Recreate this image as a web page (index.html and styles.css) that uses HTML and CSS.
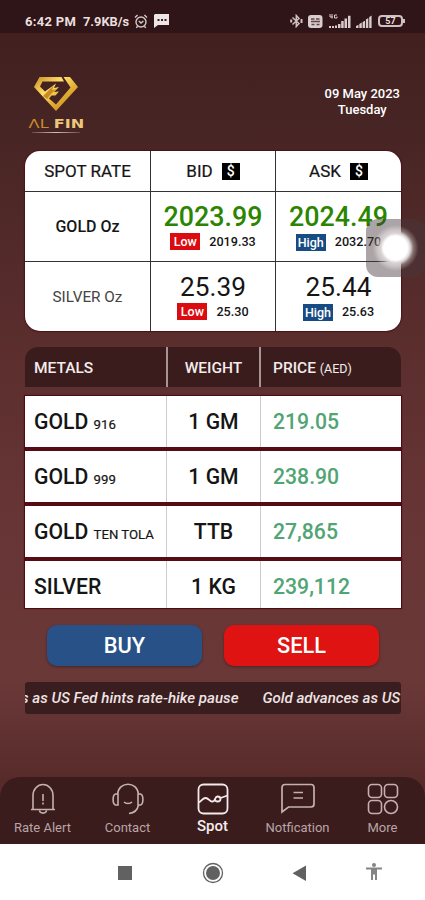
FILE: index.html
```html
<!DOCTYPE html>
<html lang="en">
<head>
    <meta charset="UTF-8">
    <meta name="viewport" content="width=device-width, initial-scale=1.0">
    <title>Al Fin - Spot Rate</title>
    <link rel="stylesheet" href="styles.css">
</head>
<body>

    <!-- Phone status bar -->
    <div class="status-bar">
        <span class="time">6:42 PM</span>
        <span class="speed">7.9KB/s</span>
        <svg class="alarm" width="14" height="15" viewBox="0 0 14 15" fill="none" stroke="#d5c8c8" stroke-width="1.4">
            <circle cx="7" cy="8" r="5"/>
            <path d="M1 3.4 3.6 1M13 3.4 10.4 1M4.8 7 7 9l2.4-2M3.5 12.2 2.4 14M10.5 12.2l1.1 1.8"/>
        </svg>
        <svg class="sms" width="16" height="14" viewBox="0 0 16 14">
            <path d="M1 0h14v11H4L0 14V1z" fill="#eee6e6"/>
            <path d="M3.5 5h2v2h-2zM7 5h2v2H7zM10.5 5h2v2h-2z" fill="#3a2020"/>
        </svg>
        <div class="status-right">
            <svg width="13" height="14" viewBox="0 0 13 14" fill="none" stroke="#cfc1c1" stroke-width="1.5">
                <path d="M2.5 3.5 9 9.500 6.300 12.500v-11L9 4.500 2.500 10.500"/>
                <path d="M1.200 5.500v3M11.500 5v4" stroke-width="2"/>
            </svg>
            <svg width="15" height="13" viewBox="0 0 15 13">
                <rect x="0" y="0" width="14.5" height="13" rx="3" fill="#d8cccc"/>
                <path d="M3 4h3.5M8 4h3.5M3 6.5h9M3.5 9.5h3M8.5 9.5h3" stroke="#604646" stroke-width="1.4"/>
            </svg>
            <svg width="23" height="15" viewBox="0 0 23 15" fill="#d8cccc">
                <path d="M1 12h2v2H1zM4 12h2v2H4zM7 11.5h2V14H7zM10 10h2.5v4H10zM13.2 7h2.5v7h-2.5zM16.5 4.5H19V14h-2.5zM20 1.8h2.5V14H20z"/>
                <path d="M2 0v3h3M4 0v4.5M9 1H6.5v3H9V2.5" fill="none" stroke="#d8cccc"/>
            </svg>
            <svg width="16" height="15" viewBox="0 0 16 15" fill="#d8cccc">
                <path d="M0 14v-2l2.5-1.3V14zM3.3 14v-4l2.5-1.5V14zM6.6 14V8L9 6.7V14zM9.900 14V5.500L12.300 4v10zM13.200 14V3l2.400-1.400V14z"/>
            </svg>
            <div class="battery">57</div>
        </div>
    </div>

    <header>
        <div class="logo">
            <svg width="46" height="36" viewBox="0 0 46 36">
                <defs>
                    <linearGradient id="gold" x1="0" y1="0" x2="1" y2="1">
                        <stop offset="0" stop-color="#c98a21"/>
                        <stop offset="0.35" stop-color="#ffdf68"/>
                        <stop offset="0.6" stop-color="#e2ad31"/>
                        <stop offset="1" stop-color="#b97b1c"/>
                    </linearGradient>
                </defs>
                <path d="M6.500 1H28.500L31 5.500H9.500L7 10.500l5 5 11-8-2 4.500 5-1-5 5 5-.5-3.500 4h-4l-2.500 3 7 6L37.500 11.500 30.500 1H37l8 10-22 24L1 11z" fill="url(#gold)"/>
                <path d="M10 20 21 9l-2 5 4-1-5 5-4 5z" fill="#c88b24"/>
            </svg>
            <div class="logo-name"><span>ΛL</span> <b>FIN</b></div>
            <div class="logo-line"></div>
        </div>
        <div class="date">09 May 2023<br>Tuesday</div>
    </header>

    <!-- Spot rates -->
    <div class="spot">
        <div class="cell head">SPOT RATE</div>
        <div class="cell head">BID <span class="dollar">$</span></div>
        <div class="cell head">ASK <span class="dollar">$</span></div>

        <div class="cell name">GOLD Oz</div>
        <div class="cell">
            <div class="rate green">2023.99</div>
            <div class="limit"><span class="tag low">Low</span>2019.33</div>
        </div>
        <div class="cell">
            <div class="rate green">2024.49</div>
            <div class="limit"><span class="tag high">High</span>2032.70</div>
        </div>

        <div class="cell name silver">SILVER Oz</div>
        <div class="cell">
            <div class="rate">25.39</div>
            <div class="limit"><span class="tag low">Low</span>25.30</div>
        </div>
        <div class="cell">
            <div class="rate">25.44</div>
            <div class="limit"><span class="tag high">High</span>25.63</div>
        </div>
        <div class="touch"></div>
    </div>

    <!-- Metal prices -->
    <div class="metals-head">
        <div>METALS</div>
        <div>WEIGHT</div>
        <div>PRICE <small>(AED)</small></div>
    </div>
    <div class="metals">
        <div class="metal">
            <div>GOLD <small>916</small></div>
            <div>1 GM</div>
            <div>219.05</div>
        </div>
        <div class="metal">
            <div>GOLD <small>999</small></div>
            <div>1 GM</div>
            <div>238.90</div>
        </div>
        <div class="metal">
            <div>GOLD <small>TEN TOLA</small></div>
            <div>TTB</div>
            <div>27,865</div>
        </div>
        <div class="metal">
            <div>SILVER</div>
            <div>1 KG</div>
            <div>239,112</div>
        </div>
    </div>

    <div class="actions">
        <button class="buy">BUY</button>
        <button class="sell">SELL</button>
    </div>

    <div class="ticker">
        <div class="news"><span>s as US Fed hints rate-hike pause</span><span>Gold advances as US</span></div>
    </div>

    <!-- Bottom menu -->
    <nav>
        <a>
            <svg width="26" height="32" viewBox="0 0 26 32" fill="none" stroke="#c4b0b0" stroke-width="1.6">
                <path d="M3 26V12.500a10 11 0 0 1 20 0V26M1 26.500h24M9.500 27.500c.5 3.500 6.500 3.500 7 0M13 11v7M13 19.500v2"/>
            </svg>
            <span>Rate Alert</span>
        </a>
        <a>
            <svg width="32" height="32" viewBox="0 0 32 32" fill="none" stroke="#c4b0b0" stroke-width="1.6">
                <path d="M5.500 11C7-2 25-2 26.500 11M6 11H3.500C.3 12 .3 21 3.500 22H6zM26 11h2.500c3.200 1 3.200 10 0 11H26zM26.500 22c-1 5-4 8-9.500 8.500M12 19c2 2 6 2 8 0"/>
            </svg>
            <span>Contact</span>
        </a>
        <a class="active">
            <svg width="32" height="32" viewBox="0 0 32 32" fill="none" stroke="#f3eaea" stroke-width="1.8">
                <rect x="1.500" y="1.500" width="29" height="29" rx="5"/>
                <path d="M1.500 19.500c3-1 4-4.500 7-4.500 3.500 0 4 4 7 3.500 3 0 2-5 5-5 2 0 3 1 3 2.500s-1.500 2.500-3 2.500-2.500-1-2.500-2.500M23.500 15l7-2.500"/>
            </svg>
            <span>Spot</span>
        </a>
        <a>
            <svg width="34" height="32" viewBox="0 0 34 32" fill="none" stroke="#c4b0b0" stroke-width="1.700">
                <path d="M1 29V4.500Q1 1.500 4 1.500h26q3 0 3 3V21q0 3-3 3H7.500zM12.500 9.500h9.500M12.500 15h9.500"/>
            </svg>
            <span>Notfication</span>
        </a>
        <a>
            <svg width="32" height="32" viewBox="0 0 32 32" fill="none" stroke="#c4b0b0" stroke-width="1.600">
                <rect x="1.500" y="1.500" width="13" height="13" rx="3.500"/>
                <rect x="17.500" y="1.500" width="13" height="13" rx="3.500"/>
                <rect x="1.500" y="17.500" width="13" height="13" rx="3.500"/>
                <circle cx="24" cy="24" r="6.500"/>
            </svg>
            <span>More</span>
        </a>
    </nav>

    <div class="system-bar">
        <svg width="425" height="57" viewBox="0 0 425 57" fill="#616161">
            <rect x="118" y="22" width="14" height="14"/>
            <circle cx="213" cy="29" r="9.500" fill="none" stroke="#616161" stroke-width="1.300"/>
            <circle cx="213" cy="29" r="7"/>
            <path d="M306 21.500V37L292.500 29.300z"/>
            <circle cx="374" cy="21" r="2" fill="#858585"/>
            <path d="M366 23.500h16v2h-5V36h-2v-5.500h-2V36h-2V25.500h-5z" fill="#858585"/>
        </svg>
    </div>

</body>
</html>
```
FILE: styles.css
```css
* {
    box-sizing: border-box;
}

body {
    font-family: Roboto, "Liberation Sans", sans-serif;
    margin: 0;
    height: 900px;
    overflow: hidden;
    color: #151515;
    background: linear-gradient(to bottom, #401e1e 0, #472524 130px, #5a2d2d 330px, #683536 520px, #6b3838 680px, #582b2b 780px);
}

/* Status bar */
.status-bar {
    height: 33px;
    padding: 9px 20px 0 25px;
    display: flex;
    align-items: center;
    background: #2f1517;
    color: #e9dfdf;
    font-size: 13px;
    font-weight: 700;
}

.time {
    width: 58px;
    letter-spacing: 0.3px;
    white-space: nowrap;
}

.speed {
    width: 51px;
    font-size: 12.8px;
    white-space: nowrap;
}

.sms {
    margin-left: 6px;
}

.status-right {
    margin-left: auto;
    display: flex;
    align-items: center;
    gap: 5px;
}

.battery {
    width: 25px;
    height: 12px;
    margin: 0 2px 0 1px;
    border: 2px solid #cfc1c1;
    border-radius: 4px;
    font-size: 9px;
    line-height: 8px;
    text-align: center;
    position: relative;
}

.battery::after {
    content: "";
    position: absolute;
    right: -4px;
    top: 2px;
    width: 2px;
    height: 4px;
    background: #cfc1c1;
}

/* Header */
header {
    height: 118px;
    padding: 43px 25px 0 28px;
    display: flex;
    justify-content: space-between;
}

.logo {
    width: 56px;
    display: flex;
    flex-direction: column;
    align-items: center;
}

.logo-name {
    margin-top: 4px;
    font-family: "DejaVu Sans", sans-serif;
    font-size: 13px;
    line-height: 15px;
    color: #edc87a;
    white-space: nowrap;
    transform: scaleX(1.24);
}

.logo-name span {
    color: #c98d2b;
}

.logo-line {
    width: 48px;
    height: 1px;
    margin-top: 1px;
    background: linear-gradient(to right, #6b4a42, #d5c0ac, #6b4a42);
}

.date {
    margin-top: 10px;
    color: #fff;
    font-size: 13px;
    font-weight: 500;
    line-height: 16px;
    text-align: center;
}

/* Spot table */
.spot {
    position: relative;
    width: 376px;
    height: 180px;
    margin-left: 25px;
    display: grid;
    grid-template-columns: 126px 125px 125px;
    grid-template-rows: 41px 70px 69px;
    background: #fff;
    border-radius: 15px;
    box-shadow: 0 0 1px 1px #4d1118;
}

.cell {
    border-right: 1px solid #333;
    border-bottom: 1px solid #333;
    display: flex;
    flex-direction: column;
    align-items: center;
    padding-top: 9px;
}

.cell:nth-child(3n) {
    border-right: none;
}

.cell:nth-child(n+7) {
    border-bottom: none;
}

.head {
    flex-direction: row;
    justify-content: center;
    gap: 9px;
    padding: 0;
    font-size: 17px;
    -webkit-text-stroke: 0.2px #151515;
}

.dollar {
    width: 18px;
    height: 17px;
    background: #000;
    color: #fff;
    font-size: 14px;
    font-weight: 500;
    line-height: 17px;
    text-align: center;
    -webkit-text-stroke: 0;
}

.name {
    justify-content: center;
    padding: 0;
    font-size: 16px;
    font-weight: 500;
}

.silver {
    font-size: 15.3px;
    font-weight: 400;
    color: #444;
}

.rate {
    font-size: 26.2px;
    line-height: 32px;
}

.green {
    color: #2b8500;
    font-size: 26.8px;
    font-weight: 500;
}

.limit {
    display: flex;
    align-items: center;
    gap: 9px;
    font-size: 12.6px;
    font-weight: 500;
}

.tag {
    width: 30px;
    height: 17px;
    color: #fff;
    font-size: 12.5px;
    line-height: 17px;
    text-align: center;
}

.low {
    background: #db0b12;
}

.high {
    background: #164b83;
    position: relative;
    top: 1px;
}

/* Floating touch button */
.touch {
    position: absolute;
    left: 341px;
    top: 68px;
    width: 59px;
    height: 58px;
    border-radius: 12px;
    background: radial-gradient(circle at 50% 50%, #fff 0, #fff 12px, #d8d2d3 15px, rgba(170, 160, 163, 0.6) 18px, rgba(70, 55, 60, 0.45) 23px);
}

/* Metals table */
.metals-head,
.metal {
    display: grid;
    grid-template-columns: 141px 95px 1fr;
}

.metals-head {
    width: 376px;
    height: 40px;
    margin: 16px 0 9px 25px;
    background: #3b1c1d;
    border-radius: 13px 13px 0 0;
    color: #f4ecec;
    font-size: 15.5px;
    font-weight: 500;
    line-height: 42px;
}

.metals-head small {
    font-size: 12.5px;
    font-weight: 400;
}

.metals-head div,
.metal div {
    height: 100%;
    padding-left: 9px;
    white-space: nowrap;
}

.metals-head div:nth-child(2),
.metal div:nth-child(2) {
    padding: 0;
    text-align: center;
    border: solid #ccc;
    border-width: 0 1px;
}

.metals-head div:nth-child(2) {
    height: 40px;
    border-color: #a89494;
    border-width: 0 2px;
}

.metals-head div:nth-child(3),
.metal div:nth-child(3) {
    padding-left: 12px;
}

.metals {
    width: 376px;
    margin-left: 25px;
    display: grid;
    gap: 4px;
    background: #570b14;
    box-shadow: 0 0 1px 1px #4d0c13;
}

.metal {
    height: 51px;
    overflow: hidden;
    background: #fff;
    font-size: 21.2px;
    font-weight: 500;
    line-height: 51px;
}

.metal:last-child {
    height: 47px;
}

.metal small {
    font-size: 13.2px;
    font-weight: 400;
    -webkit-text-stroke: 0.2px #151515;
}

.metal div:nth-child(3) {
    color: #51a474;
}

/* Buttons */
.actions {
    display: flex;
    gap: 22px;
    margin: 17px 0 0 47px;
}

button {
    width: 155px;
    height: 41px;
    padding: 0;
    border: none;
    border-radius: 10px;
    color: #fff;
    font-family: inherit;
    font-size: 21.8px;
    font-weight: 500;
    box-shadow: 0 1px 3px rgba(0, 0, 0, 0.35);
}

.buy {
    background: #285287;
}

.sell {
    background: #df1311;
}

/* News ticker */
.ticker {
    width: 376px;
    height: 32px;
    margin: 16px 0 63px 25px;
    background: #3a1d1e;
    border-radius: 3px;
    overflow: hidden;
}

.news {
    margin-left: -4px;
    display: flex;
    gap: 24px;
    color: #eee4e4;
    font-size: 15.1px;
    font-style: italic;
    font-weight: 500;
    line-height: 32px;
    white-space: nowrap;
}

/* Bottom menu */
nav {
    height: 67px;
    padding-top: 6px;
    display: grid;
    grid-template-columns: repeat(5, 85px);
    background: #3b1c1d;
    border-radius: 20px 20px 0 0;
}

nav a {
    display: flex;
    flex-direction: column;
    align-items: center;
    color: #b9a5a5;
    font-size: 13px;
}

nav span {
    margin-top: 5px;
    line-height: 15px;
}

nav .active {
    color: #f5eded;
    font-size: 15px;
    font-weight: 500;
}

nav .active span {
    margin-top: 4px;
}

.system-bar {
    height: 57px;
    background: #fff;
}
```
